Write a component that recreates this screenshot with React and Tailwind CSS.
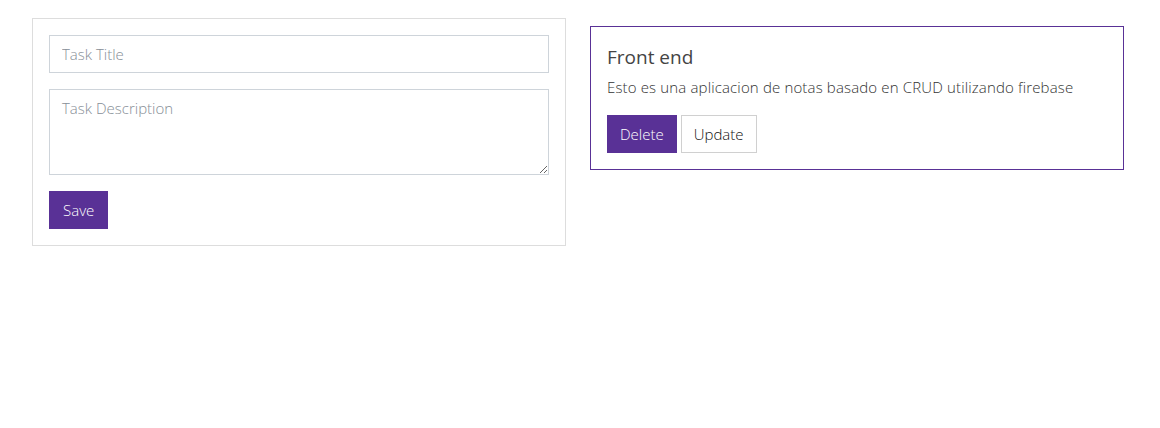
export default function App() {
  return (
    <div
      className="w-[1160px] h-[428px] bg-white text-[#444]"
      style={{ fontFamily: '"Segoe UI", "Open Sans", "Noto Sans", sans-serif' }}
    >
      <div className="flex items-start gap-6 pl-8 pt-[18px]">
        <div className="w-[534px] border border-[#dddddd] p-4 flex flex-col gap-4">
          <input
            className="h-[38px] w-full border border-[#ced4da] px-3 text-[15px] font-light text-[#495057] placeholder:text-[#868e96] outline-none"
            placeholder="Task Title"
          />
          <textarea
            className="h-[86px] w-full border border-[#ced4da] px-3 py-[7px] text-[15px] font-light leading-[22px] text-[#495057] placeholder:text-[#868e96] outline-none"
            placeholder="Task Description"
          />
          <div>
            <button className="h-[38px] bg-[#593196] px-[14px] text-[15px] font-light text-white">
              Save
            </button>
          </div>
        </div>
        <div className="mt-2 w-[534px] border border-[#593196] p-4">
          <h5 className="mt-[2px] text-[19px] leading-[24px] font-medium text-[#444] mb-[7px]">Front end</h5>
          <p className="text-[15px] leading-[22px] tracking-[0.15px] font-light text-[#333] mb-[17px]">
            Esto es una aplicacion de notas basado en CRUD utilizando firebase
          </p>
          <div className="flex gap-1">
            <button className="h-[38px] bg-[#593196] px-[13px] text-[15px] font-light text-white">
              Delete
            </button>
            <button className="h-[38px] border border-[#d0d0d0] bg-white px-3 text-[15px] font-light text-[#111]">
              Update
            </button>
          </div>
        </div>
      </div>
    </div>
  );
}
